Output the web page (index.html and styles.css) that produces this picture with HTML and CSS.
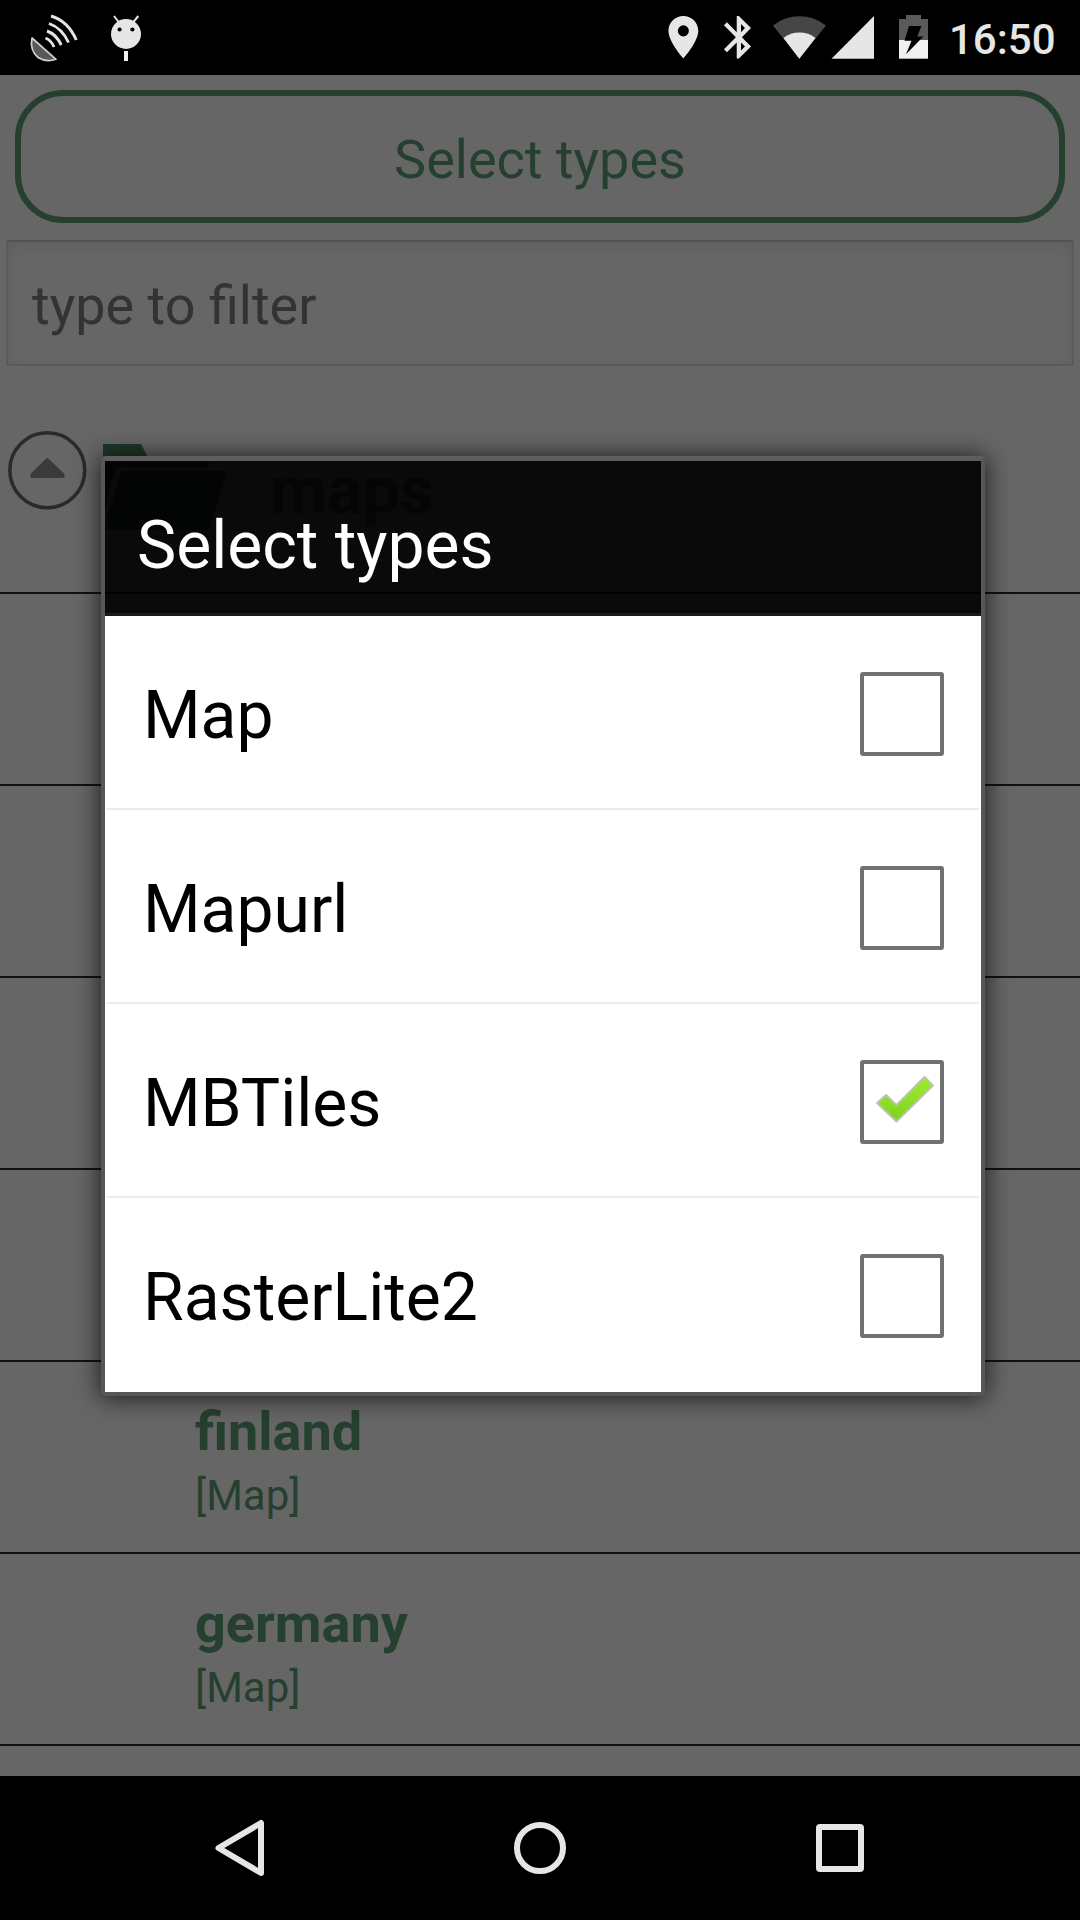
FILE: index.html
```html
<!DOCTYPE html>
<html lang="en">
<head>
<meta charset="utf-8">
<title>Select types</title>
<link rel="stylesheet" href="styles.css">
</head>
<body>
<div class="screen">
  <header class="status-bar">
    <svg class="notifications" width="200" height="75" viewBox="0 0 200 75">
      <path d="M32 38 L56 59.300 Q46 62.500 38 57.500 Q29.500 50 32 38Z" fill="#585858" stroke="#d0d0d0" stroke-width="1.700" stroke-linejoin="round"/>
      <path d="M51 16Q68 21 76.300 40M49 23.500Q62 28 68.500 42.500M47 31Q56 34 61.300 45M45.500 38Q51 40 54 47" fill="none" stroke="#e4e4e4" stroke-width="2.900"/>
      <circle cx="126" cy="34" r="15" fill="#e6e6e6"/>
      <path d="M114 16L119 22.500M138.300 16L133 22.500" stroke="#e6e6e6" stroke-width="2"/>
      <circle cx="119.600" cy="29.500" r="2.100"/><circle cx="132.400" cy="29.500" r="2.100"/>
      <path d="M124 51h4v10h-4z" fill="#f0f0f0"/>
    </svg>
    <svg class="indicators" width="300" height="75" viewBox="640 0 300 75">
      <path transform="translate(657.800 11.700) scale(2.130)" fill="#e6e6e6" d="M12 2C8.130 2 5 5.130 5 9c0 5.250 7 13 7 13s7-7.750 7-13c0-3.870-3.130-7-7-7zm0 9.600a2.600 2.600 0 1 1 0-5.200 2.600 2.600 0 0 1 0 5.200z"/>
      <path transform="translate(713.300 11.700) scale(2.130)" fill="#e6e6e6" d="M17.710 7.710L12 2h-1v7.590L6.410 5 5 6.410 10.590 12 5 17.590 6.410 19 11 14.410V22h1l5.710-5.710-4.300-4.290 4.300-4.290zM13 5.830l1.880 1.880L13 9.590V5.830zm1.880 10.460L13 18.170v-3.760l1.880 1.880z"/>
      <path d="M799.300 58.700L773 25.500A42.500 42.500 0 0 1 826 25.500Z" fill="#464646"/>
      <path d="M799.300 58.700L783.500 38A26.500 26.500 0 0 1 815.500 38Z" fill="#e6e6e6"/>
      <path d="M831.500 58.700H874V16Z" fill="#e6e6e6"/>
      <path d="M899 40V19H906V15H921V19H928V40Z" fill="#5a5a5a"/>
      <path d="M899 40H928V58.700H899Z" fill="#f0f0f0"/>
      <path d="M909 26H921.500L917.300 36.500H923.300L906 54.300L911.500 40.700H904.500Z"/>
    </svg>
    <span class="clock">16:50</span>
  </header>

  <main class="app">
    <div class="type-button">Select types</div>
    <div class="filter">type to filter</div>
    <div class="group">
      <svg class="toggle" width="80" height="80" viewBox="0 0 80 80">
        <circle cx="40.300" cy="40.300" r="37.500" fill="none" stroke="#2a2a2a" stroke-width="3.500"/>
        <path d="M40.300 29.500L56 44.500V46.500H25V44.500Z" fill="#3a3a3a" stroke="#3a3a3a" stroke-width="3" stroke-linejoin="round"/>
      </svg>
      <svg class="folder" width="126" height="88" viewBox="0 0 126 88">
        <path d="M0 0H38L47 17H106V23H13L0 70Z" fill="#1f3929"/>
        <path d="M19 27H124L106 86H0Z" fill="#1f3929"/>
      </svg>
      <span class="group-name">maps</span>
    </div>
    <div class="entry"></div>
    <div class="entry"></div>
    <div class="entry"></div>
    <div class="entry"></div>
    <div class="entry"><div class="entry-name">finland</div><div class="entry-type">[Map]</div></div>
    <div class="entry"><div class="entry-name">germany</div><div class="entry-type">[Map]</div></div>
  </main>

  <nav class="nav-bar">
    <svg width="1080" height="144" viewBox="0 0 1080 144" fill="none" stroke="#e6e6e6" stroke-width="6" stroke-linejoin="round">
      <path d="M218.500 72L261 47V97Z"/>
      <circle cx="540" cy="72" r="23"/>
      <rect x="819" y="51" width="42" height="42" rx="1"/>
    </svg>
  </nav>

  <section class="dialog">
    <h1 class="dialog-title">Select types</h1>
    <div class="options">
      <div class="option"><span class="label">Map</span><span class="box"></span></div>
      <div class="option"><span class="label">Mapurl</span><span class="box"></span></div>
      <div class="option"><span class="label">MBTiles</span><span class="box">
        <svg width="76" height="76" viewBox="0 0 76 76">
          <defs><linearGradient id="tick" x1="0" y1="0" x2="0" y2="1"><stop offset="0" stop-color="#a0ea32"/><stop offset="1" stop-color="#7dd31c"/></linearGradient></defs>
          <path d="M13 39L22 31L32.500 41L60.500 13L69 21.500L32.500 57.500Z" fill="url(#tick)" stroke="#b9c5ae" stroke-width="2" stroke-linejoin="round"/>
        </svg></span></div>
      <div class="option"><span class="label">RasterLite2</span><span class="box"></span></div>
    </div>
  </section>
</div>
</body>
</html>
```
FILE: styles.css
```css
* { box-sizing: border-box; }
body { margin: 0; background: #000; font-family: Roboto, "Noto Sans", sans-serif; }
svg { display: block; flex: none; }

.screen {
  position: relative;
  display: flex;
  flex-direction: column;
  width: 1080px;
  height: 1920px;
  overflow: hidden;
  background: #666;
}

.status-bar {
  flex: none;
  display: flex;
  height: 75px;
  background: #000;
}
.indicators { margin-left: 440px; }
.clock {
  margin-left: 9px;
  padding-top: 2px;
  line-height: 75px;
  font-size: 42px;
  font-weight: 500;
  color: #e6e6e6;
}

.app { flex: 1; min-height: 0; overflow: hidden; color: #25402f; }
.type-button {
  height: 133px;
  margin: 15px 15px 17px;
  border: 6px solid #25402f;
  border-radius: 48px;
  line-height: 127px;
  text-align: center;
  font-size: 54px;
}
.filter {
  height: 126px;
  margin: 0 6px;
  padding: 5px 0 0 24px;
  border: 2px solid #5b5b5b;
  border-top-color: #535353;
  box-shadow: inset 0 4px 14px rgba(0, 0, 0, 0.08);
  line-height: 118px;
  font-size: 54px;
  color: #333;
}

.group {
  display: flex;
  align-items: flex-start;
  height: 228px;
  padding: 64px 0 0 7px;
  border-bottom: 2px solid #111;
}
.folder { margin: 14px 0 0 16px; }
.group-name {
  margin: 21px 0 0 41px;
  line-height: 80px;
  font-size: 66px;
  font-weight: 700;
}
.entry {
  height: 192px;
  padding: 38px 0 0 195px;
  border-bottom: 2px solid #111;
}
.entry-name { line-height: 64px; font-size: 54px; font-weight: 700; }
.entry-type { margin-top: 7px; line-height: 50px; font-size: 42px; }

.nav-bar { flex: none; height: 144px; background: #000; }

.dialog {
  position: absolute;
  left: 101px;
  top: 456px;
  width: 884px;
  height: 940px;
  border: 4px solid #575757;
  border-top: 5px solid #5e5e5e;
  border-radius: 5px;
  box-shadow: 0 1px 24px 1px rgba(0, 0, 0, 0.72);
}
.dialog-title {
  height: 155px;
  margin: 0;
  padding: 17px 0 0 32px;
  border-bottom: 3px solid #1a1a1a;
  background: rgba(0, 0, 0, 0.9);
  line-height: 135px;
  font-size: 66px;
  font-weight: 400;
  color: #fff;
}
.options { height: 776px; padding: 0 2px; background: #fff; }
.option {
  display: flex;
  align-items: center;
  justify-content: space-between;
  height: 194px;
  padding: 0 35px 0 36px;
  border-bottom: 2px solid #ebebeb;
}
.option:last-child { border-bottom-color: #fff; }
.label { padding-top: 7px; font-size: 66px; color: #000; }
.box {
  width: 84px;
  height: 84px;
  margin-top: 4px;
  border: 4px solid #717171;
  border-radius: 3px;
}
```
